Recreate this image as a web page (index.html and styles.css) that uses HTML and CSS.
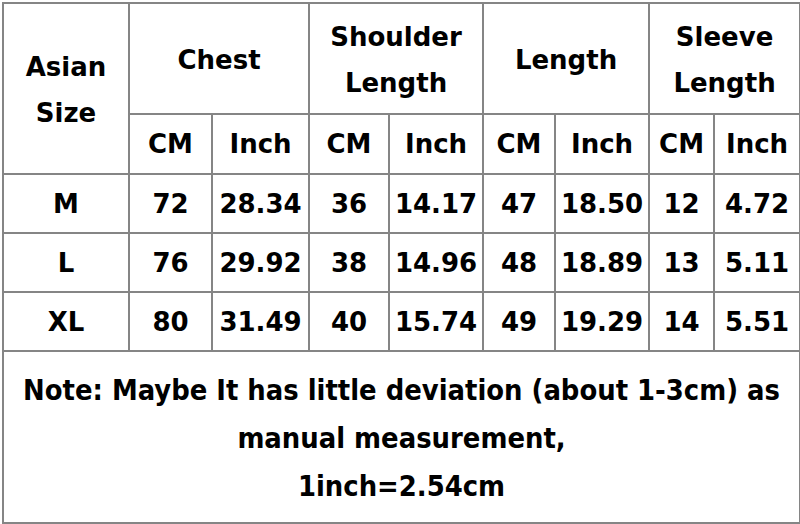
FILE: index.html
```html
<!DOCTYPE html>
<html>
<head>
<meta charset="utf-8">
<link rel="stylesheet" href="styles.css">
</head>
<body>
<table class="size-table">
  <colgroup>
    <col class="c-size">
    <col class="c-cm1"><col class="c-in1">
    <col class="c-cm2"><col class="c-in2">
    <col class="c-cm3"><col class="c-in3">
    <col class="c-cm4"><col class="c-in4">
  </colgroup>
  <tr class="r-head">
    <th rowspan="2">Asian<br>Size</th>
    <th colspan="2">Chest</th>
    <th colspan="2">Shoulder<br>Length</th>
    <th colspan="2">Length</th>
    <th colspan="2">Sleeve<br>Length</th>
  </tr>
  <tr class="r-unit">
    <th>CM</th><th>Inch</th>
    <th>CM</th><th>Inch</th>
    <th>CM</th><th>Inch</th>
    <th>CM</th><th>Inch</th>
  </tr>
  <tr class="r-data">
    <th>M</th><td>72</td><td>28.34</td><td>36</td><td>14.17</td><td>47</td><td>18.50</td><td>12</td><td>4.72</td>
  </tr>
  <tr class="r-data">
    <th>L</th><td>76</td><td>29.92</td><td>38</td><td>14.96</td><td>48</td><td>18.89</td><td>13</td><td>5.11</td>
  </tr>
  <tr class="r-data">
    <th>XL</th><td>80</td><td>31.49</td><td>40</td><td>15.74</td><td>49</td><td>19.29</td><td>14</td><td>5.51</td>
  </tr>
  <tr class="r-note">
    <td colspan="9">Note: Maybe It has little deviation (about 1-3cm) as<br>manual measurement,<br>1inch=2.54cm</td>
  </tr>
</table>
</body>
</html>
```
FILE: styles.css
```css
html, body {
  margin: 0;
  padding: 0;
  background: #ffffff;
}
body {
  padding: 2px 0 0 2px;
}
.size-table {
  border-collapse: collapse;
  table-layout: fixed;
  width: 797px;
  font-family: "DejaVu Sans", sans-serif;
  font-weight: bold;
  font-size: 26px;
  color: #000;
}
.size-table th,
.size-table td {
  border: 2px solid #858585;
  text-align: center;
  vertical-align: middle;
  padding: 0;
  font-weight: bold;
}
.c-size { width: 126px; }
.c-cm1 { width: 83px; }
.c-in1 { width: 97px; }
.c-cm2 { width: 80px; }
.c-in2 { width: 94px; }
.c-cm3 { width: 72px; }
.c-in3 { width: 94px; }
.c-cm4 { width: 65px; }
.c-in4 { width: 86px; }
.r-head th {
  height: 106px;
  line-height: 46px;
  padding-top: 3px;
}
.r-unit th { height: 58px; }
.r-data th, .r-data td { height: 57px; }
.r-note td {
  height: 168px;
  font-family: "DejaVu Sans Condensed", "DejaVu Sans", sans-serif;
  font-size: 28.8px;
  line-height: 48px;
  padding-top: 2px;
}
```
